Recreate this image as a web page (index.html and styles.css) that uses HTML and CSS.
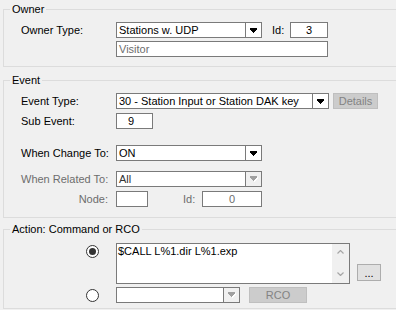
FILE: index.html
```html
<!DOCTYPE html>
<html>
<head>
  <link rel="stylesheet" href="styles.css">
</head>
<body>
  <fieldset class="group owner">
    <legend>Owner</legend>
    <div class="group-body owner-body">
      <div class="row">
        <span class="lbl">Owner Type:</span>
        <div class="combo owner-type">
          <span class="val">Stations w. UDP</span>
          <span class="drop">
            <svg width="7" height="5" viewBox="0 0 7 5"><rect x="0" y="0" width="7" height="2"/><rect x="1" y="2" width="5" height="1"/><rect x="2" y="3" width="3" height="1"/><rect x="3" y="4" width="1" height="1"/></svg>
          </span>
        </div>
        <span class="id-lbl owner-id-lbl">Id:</span>
        <div class="field center owner-id">3</div>
      </div>
      <div class="row">
        <span class="lbl"></span>
        <div class="field grey-text visitor">Visitor</div>
      </div>
    </div>
  </fieldset>

  <fieldset class="group event">
    <legend>Event</legend>
    <div class="group-body event-body">
      <div class="row">
        <span class="lbl">Event Type:</span>
        <div class="combo event-type">
          <span class="val">30 - Station Input or Station DAK key</span>
          <span class="drop">
            <svg width="7" height="5" viewBox="0 0 7 5"><rect x="0" y="0" width="7" height="2"/><rect x="1" y="2" width="5" height="1"/><rect x="2" y="3" width="3" height="1"/><rect x="3" y="4" width="1" height="1"/></svg>
          </span>
        </div>
        <button class="btn disabled details">Details</button>
      </div>
      <div class="row sub-row">
        <span class="lbl">Sub Event:</span>
        <div class="field sub-event">9</div>
      </div>
      <div class="row change-row">
        <span class="lbl">When Change To:</span>
        <div class="combo change-to">
          <span class="val">ON</span>
          <span class="drop">
            <svg width="7" height="5" viewBox="0 0 7 5"><rect x="0" y="0" width="7" height="2"/><rect x="1" y="2" width="5" height="1"/><rect x="2" y="3" width="3" height="1"/><rect x="3" y="4" width="1" height="1"/></svg>
          </span>
        </div>
      </div>
      <div class="row related-row">
        <span class="lbl grey-text">When Related To:</span>
        <div class="combo off change-to">
          <span class="val">All</span>
          <span class="drop">
            <svg width="8" height="6" viewBox="0 0 8 6"><g fill="#fff"><rect x="1" y="1" width="7" height="2"/><rect x="2" y="3" width="5" height="1"/><rect x="3" y="4" width="3" height="1"/><rect x="4" y="5" width="1" height="1"/></g><g fill="#a0a0a0"><rect x="0" y="0" width="7" height="2"/><rect x="1" y="2" width="5" height="1"/><rect x="2" y="3" width="3" height="1"/><rect x="3" y="4" width="1" height="1"/></g></svg>
          </span>
        </div>
      </div>
      <div class="row node-row">
        <span class="lbl grey-text right">Node:</span>
        <div class="field node"></div>
        <span class="id-lbl grey-text node-id-lbl">Id:</span>
        <div class="field center grey-text node-id">0</div>
      </div>
    </div>
  </fieldset>

  <fieldset class="group action">
    <legend>Action: Command or RCO</legend>
    <div class="group-body action-body">
      <div class="row cmd-row">
        <span class="radio checked"></span>
        <div class="memo">
          <div class="memo-text">$CALL L%1.dir L%1.exp</div>
          <div class="scroll">
            <svg width="7" height="4" viewBox="0 0 7 4"><path d="M0.5 3.5 L3.5 0.5 L6.5 3.5" fill="none" stroke="#a6a6a6" stroke-width="1.2"/></svg>
            <svg width="7" height="4" viewBox="0 0 7 4"><path d="M0.5 0.5 L3.5 3.5 L6.5 0.5" fill="none" stroke="#a6a6a6" stroke-width="1.2"/></svg>
          </div>
        </div>
        <button class="btn more">...</button>
      </div>
      <div class="row rco-row">
        <span class="radio"></span>
        <div class="combo off rco-combo">
          <span class="val"></span>
          <span class="drop">
            <svg width="8" height="6" viewBox="0 0 8 6"><g fill="#fff"><rect x="1" y="1" width="7" height="2"/><rect x="2" y="3" width="5" height="1"/><rect x="3" y="4" width="3" height="1"/><rect x="4" y="5" width="1" height="1"/></g><g fill="#a0a0a0"><rect x="0" y="0" width="7" height="2"/><rect x="1" y="2" width="5" height="1"/><rect x="2" y="3" width="3" height="1"/><rect x="3" y="4" width="1" height="1"/></g></svg>
          </span>
        </div>
        <button class="btn disabled rco">RCO</button>
      </div>
    </div>
  </fieldset>
</body>
</html>
```

FILE: styles.css
```css
/* dialog look, classic windows form */

html,
body {
  margin: 0;
  overflow: hidden;
}

body {
  width: 396px;
  height: 310px;
  background: #f0f0f0;
  font-family: "Liberation Sans", Arial, sans-serif;
  font-size: 11px;
  color: #000000;
}

.group {
  box-sizing: border-box;
  width: 393px;
  margin: 0 0 0 3px;
  padding: 0;
  border: 1px solid #dcdcdc;
  border-right: none;
}

.group legend {
  margin-left: 6px;
  padding: 0 2px;
  line-height: 13px;
}

.owner {
  margin-top: 3px;
}

.event {
  margin-top: 7px;
}

.action {
  margin-top: 5px;
}

.group-body {
  display: flex;
  flex-direction: column;
  padding-left: 17px;
}

.owner-body {
  padding-top: 6px;
  padding-bottom: 9px;
  gap: 3px;
}

.event-body {
  padding-top: 6px;
  padding-bottom: 10px;
}

.action-body {
  padding-top: 7px;
  padding-bottom: 5px;
}

.row {
  display: flex;
  align-items: center;
  height: 16px;
}

.sub-row {
  margin-top: 4px;
}

.change-row {
  margin-top: 16px;
}

.related-row {
  margin-top: 10px;
}

.node-row {
  margin-top: 4px;
}

.lbl {
  flex: none;
  width: 95px;
  white-space: nowrap;
}

.lbl.right {
  box-sizing: border-box;
  width: 95px;
  padding-right: 8px;
  text-align: right;
}

.grey-text {
  color: #6d6d6d;
}

.id-lbl {
  flex: none;
}

.owner-id-lbl {
  width: 18px;
  margin-left: 10px;
}

.node-id-lbl {
  width: 19px;
  margin-left: 35px;
}

/* text boxes */

.field {
  box-sizing: border-box;
  flex: none;
  height: 16px;
  padding: 0 2px;
  border: 1px solid #7a7a7a;
  background: #ffffff;
  line-height: 14px;
  white-space: nowrap;
}

.field.center {
  text-align: center;
}

.owner-id {
  width: 38px;
}

.visitor {
  width: 212px;
}

.sub-event {
  width: 37px;
  padding-left: 11px;
}

.node {
  width: 32px;
}

.node-id {
  width: 60px;
}

/* combo boxes */

.combo {
  box-sizing: border-box;
  flex: none;
  display: flex;
  height: 16px;
  border: 1px solid #7a7a7a;
  background: #ffffff;
}

.combo .val {
  flex: 1;
  padding-left: 2px;
  line-height: 14px;
  white-space: nowrap;
  overflow: hidden;
}

.combo .drop {
  display: flex;
  align-items: center;
  justify-content: center;
  width: 15px;
  border-left: 1px solid #7a7a7a;
  background: #ffffff;
}

.combo.off .drop {
  background: #f0f0f0;
}

.combo.off .val {
  color: #333333;
}

.owner-type,
.change-to {
  width: 146px;
}

.event-type {
  width: 213px;
}

.rco-combo {
  width: 124px;
}

/* buttons */

.btn {
  box-sizing: border-box;
  flex: none;
  height: 16px;
  padding: 0;
  border: 1px solid #adadad;
  background: #e1e1e1;
  font-family: "Liberation Sans", Arial, sans-serif;
  font-size: 11px;
  color: #000000;
}

.btn.disabled {
  border-color: #bfbfbf;
  background: #cccccc;
  color: #838383;
}

.details {
  width: 45px;
  margin-left: 4px;
}

.more {
  align-self: flex-end;
  width: 24px;
  height: 17px;
  margin: 0 0 3px 7px;
  line-height: 10px;
}

.rco {
  width: 58px;
  margin-left: 9px;
}

/* command row */

.cmd-row {
  align-items: flex-start;
  height: 41px;
}

.rco-row {
  margin-top: 3px;
}

.radio {
  box-sizing: border-box;
  flex: none;
  display: flex;
  align-items: center;
  justify-content: center;
  width: 13px;
  height: 13px;
  margin: 0 17px 0 65px;
  border: 1px solid #333333;
  border-radius: 50%;
  background: #ffffff;
}

.cmd-row .radio {
  margin-top: 2px;
}

.radio.checked::after {
  content: "";
  width: 7px;
  height: 7px;
  border-radius: 50%;
  background: #333333;
}

.memo {
  box-sizing: border-box;
  flex: none;
  display: flex;
  width: 234px;
  height: 41px;
  border: 1px solid #7a7a7a;
  background: #ffffff;
}

.memo-text {
  flex: 1;
  padding: 1px 0 0 1px;
  line-height: 13px;
}

.scroll {
  display: flex;
  flex-direction: column;
  justify-content: space-between;
  align-items: center;
  width: 17px;
  padding: 6px 0 7px;
  box-sizing: border-box;
  background: #f0f0f0;
}
```
